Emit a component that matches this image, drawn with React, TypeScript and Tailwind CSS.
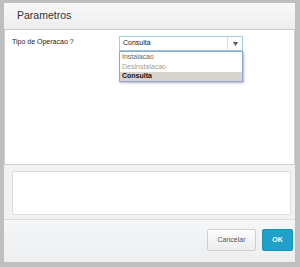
import React from 'react';

const font = { fontFamily: '"Liberation Sans", Arial, sans-serif' };

function SelectField() {
  return (
    <div className="relative w-[124px]">
      <div className="flex h-[15px] items-stretch border border-[#9fcfdf] bg-white">
        <span className="flex flex-1 items-center pl-[3px] text-[7px] text-[#222]">Consulta</span>
        <span className="flex w-[15px] items-center justify-center border-l border-[#cfdfe4]">
          <svg width="5" height="4" viewBox="0 0 5 4">
            <path d="M0 0h5L2.5 4z" fill="#555" />
          </svg>
        </span>
      </div>
      {/* open option list */}
      <div className="absolute left-0 top-[15px] z-10 w-[124px] border border-[#8fa6d8] bg-white shadow-[1px_1px_2px_rgba(0,0,0,0.3)]">
        <div className="flex h-[10px] items-center pl-[2px] text-[7px] text-[#666]">Instalacao</div>
        <div className="flex h-[10px] items-center pl-[2px] text-[7px] text-[#a39d95]">Desinstalacao</div>
        <div className="flex h-[9px] items-center bg-[#d7d3cd] pl-[2px] text-[7px] font-bold text-[#111]">Consulta</div>
      </div>
    </div>
  );
}

export default function App() {
  return (
    <div
      style={font}
      className="h-[267px] w-[300px] bg-[#bfbfbf] pb-[5px] pl-[4px] pr-[5px] pt-[3px]"
    >
      <div className="flex h-full flex-col">
        {/* Header */}
        <div className="flex h-[27px] items-center border-b border-[#cccccc] bg-gradient-to-b from-[#f8f8f8] to-[#eeeeee] pl-[13px]">
          <span className="text-[10.5px] text-[#333]">Parametros</span>
        </div>

        {/* Body */}
        <div className="flex h-[135px] items-start border-x border-b border-[#cfcfcf] bg-white pl-[7px] pt-[6px]">
          <span className="w-[107px] pt-[1px] text-[7px] text-[#222]">Tipo de Operacao ?</span>
          <SelectField />
        </div>

        {/* Footer */}
        <div className="flex flex-1 flex-col bg-[#f1f2f3]">
          <div className="ml-[8px] mr-[4px] mt-[6px] h-[44px] rounded-[2px] border border-[#dddddd] bg-white" />
          <div className="mt-[4px] flex flex-1 items-start justify-end gap-[6px] border-t border-[#dcdcdc] bg-gradient-to-b from-[#f5f6f7] to-[#eceef0] pr-[2px] pt-[9px]">
            <button className="flex h-[22px] w-[49px] items-center justify-center rounded-[2px] border border-[#d0d0d0] bg-gradient-to-b from-[#fdfdfd] to-[#ececec] text-[7px] text-[#555]">
              Cancelar
            </button>
            <button className="flex h-[22px] w-[31px] items-center justify-center rounded-[2px] border border-[#1b93b9] bg-[#1fa1c9] text-[7px] font-bold text-white">
              OK
            </button>
          </div>
        </div>
      </div>
    </div>
  );
}
